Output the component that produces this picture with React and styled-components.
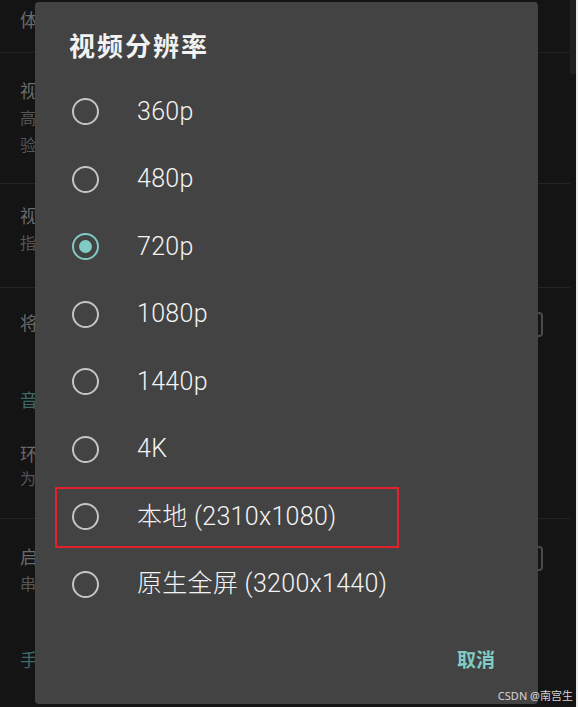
import styled, { createGlobalStyle } from 'styled-components'

const GlobalStyle = createGlobalStyle`
  html, body {
    margin: 0;
    padding: 0;
    background: #141414;
    overflow: hidden;
  }
  * {
    box-sizing: border-box;
  }
`

const font = `"Roboto", "Noto Sans CJK SC", sans-serif`

const resolutions = [
    { label: '360p' },
    { label: '480p' },
    { label: '720p', selected: true },
    { label: '1080p' },
    { label: '1440p' },
    { label: '4K' },
    { label: '本地 (2310x1080)', marked: true },
    { label: '原生全屏 (3200x1440)' },
]

// the settings page behind the dialog, mostly hidden
const settings = [
    { kind: 'item', height: 53, top: 7, lines: ['体验模式'] },
    { kind: 'item', height: 131, top: 25, lines: ['视频编码', '高版本编码', '验证兼容'] },
    { kind: 'item', height: 104, top: 19, lines: ['视频码率', '指定码率'] },
    { kind: 'item', height: 76, top: 22, lines: ['将屏幕关闭'], toggle: true, last: true },
    { kind: 'header', height: 66, top: 23, text: '音频' },
    { kind: 'item', height: 89, top: 12, lines: ['环境音频', '为了使用'], tight: true },
    { kind: 'item', height: 101, top: 25, lines: ['启用麦克风', '串流时传输'], toggle: true, last: true },
    { kind: 'header', height: 70, top: 27, text: '手柄' },
    { kind: 'item', height: 60, top: 27, lines: ['调整按键'], last: true },
]

const App = () => {
    return (
        <>
            <GlobalStyle />
            <Screen>
                <Settings>
                    {settings.map((s, i) => {
                        if (s.kind === 'header') {
                            return (
                                <SectionHeader key={i} $height={s.height} $top={s.top}>
                                    {s.text}
                                </SectionHeader>
                            )
                        }
                        return (
                            <SettingRow key={i} $height={s.height} $top={s.top} $last={s.last}>
                                <SettingText $tight={s.tight}>
                                    {s.lines.map((line, j) =>
                                        j === 0
                                            ? <SettingTitle key={j}>{line}</SettingTitle>
                                            : <SettingHint key={j}>{line}</SettingHint>
                                    )}
                                </SettingText>
                                {s.toggle && <Toggle />}
                            </SettingRow>
                        )
                    })}
                </Settings>
                <ScrollTrack>
                    <ScrollThumb />
                </ScrollTrack>
                <EdgeStrip />

                <Dialog>
                    <DialogTitle>视频分辨率</DialogTitle>
                    <OptionList>
                        {resolutions.map((r) => (
                            <Option key={r.label} $marked={r.marked}>
                                <Radio $checked={r.selected} />
                                <OptionLabel>{r.label}</OptionLabel>
                            </Option>
                        ))}
                    </OptionList>
                    <DialogFooter>
                        <TextButton>取消</TextButton>
                    </DialogFooter>
                </Dialog>

                <Watermark>CSDN @南宫生</Watermark>
            </Screen>
        </>
    )
}

export default App


const Screen = styled.div`
position: relative;
width: 578px;
height: 707px;
display: flex;
background: #141414;
overflow: hidden;
font-family: ${font};
`

const Settings = styled.div`
width: 570px;
display: flex;
flex-direction: column;
`

const SettingRow = styled.div`
flex: none;
height: ${p => p.$height}px;
padding: ${p => p.$top}px 27px 0 20px;
display: flex;
align-items: flex-start;
justify-content: space-between;
border-bottom: ${p => (p.$last ? 'none' : '1px solid #232323')};
`

const SettingText = styled.div`
display: flex;
flex-direction: column;
line-height: ${p => (p.$tight ? 25 : 27)}px;
`

const SettingTitle = styled.span`
font-size: 18px;
color: #6a6a6a;
white-space: nowrap;
`

const SettingHint = styled.span`
font-size: 16px;
color: #555555;
white-space: nowrap;
`

const Toggle = styled.div`
margin-top: 2px;
width: 44px;
height: 25px;
border: 2px solid #4a4a4a;
border-radius: 4px;
`

const SectionHeader = styled.div`
flex: none;
height: ${p => p.$height}px;
padding: ${p => p.$top}px 0 0 20px;
font-size: 18px;
line-height: 27px;
color: #3c6965;
`

const ScrollTrack = styled.div`
width: 6px;
background: #141414;
`

const ScrollThumb = styled.div`
height: 74px;
background: #1f1f1f;
`

const EdgeStrip = styled.div`
width: 2px;
background: #ececec;
`

const Dialog = styled.div`
position: absolute;
left: 35px;
top: 2px;
width: 503px;
height: 702px;
background: #434343;
border-radius: 4px;
display: flex;
flex-direction: column;
`

const DialogTitle = styled.h2`
margin: 0;
padding: 28px 0 0 34px;
font-size: 26px;
line-height: 34px;
font-weight: 700;
letter-spacing: 2px;
color: #f2f2f2;
`

const OptionList = styled.div`
margin-top: 14px;
display: flex;
flex-direction: column;
`

const Option = styled.div`
position: relative;
height: 67.5px;
padding-left: 37px;
display: flex;
align-items: center;
gap: 38px;

${p => p.$marked && `
  &::after {
    content: '';
    position: absolute;
    left: 20px;
    top: 4px;
    width: 340px;
    height: 57px;
    border: 2px solid #e3212b;
  }
`}
`

const Radio = styled.span`
position: relative;
flex: none;
width: 27px;
height: 27px;
border-radius: 50%;
border: 2.5px solid ${p => (p.$checked ? '#80cbc4' : '#c4c4c4')};

${p => p.$checked && `
  &::after {
    content: '';
    position: absolute;
    left: 50%;
    top: 50%;
    width: 13px;
    height: 13px;
    margin: -6.5px 0 0 -6.5px;
    border-radius: 50%;
    background: #80cbc4;
  }
`}
`

const OptionLabel = styled.span`
font-size: 25px;
line-height: 30px;
font-weight: 300;
letter-spacing: 0.3px;
color: #f4f4f4;
white-space: nowrap;
`

const DialogFooter = styled.div`
margin-top: 31px;
padding-right: 43px;
display: flex;
justify-content: flex-end;
`

const TextButton = styled.button`
border: none;
background: none;
padding: 0;
font-family: ${font};
font-size: 19px;
line-height: 24px;
font-weight: 700;
color: #80cbc4;
cursor: pointer;
`

const Watermark = styled.div`
position: absolute;
right: 5px;
bottom: 4px;
font-family: "Noto Sans", "Noto Sans CJK SC", sans-serif;
font-size: 11px;
line-height: 14px;
color: #d6d6d6;
`
